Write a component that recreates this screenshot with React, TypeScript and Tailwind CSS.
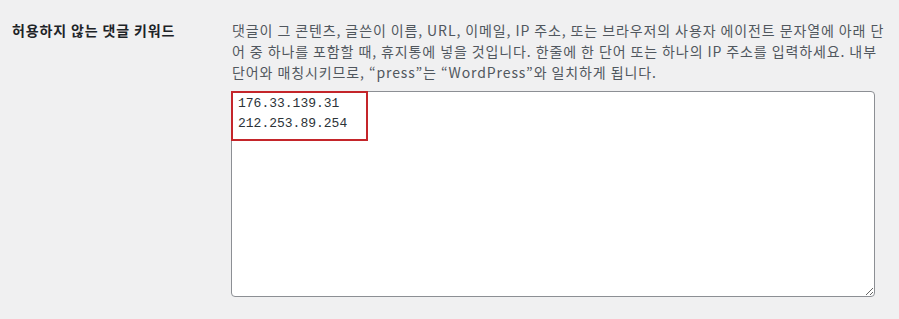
import React from 'react';

const lines = [
  '댓글이 그 콘텐츠, 글쓴이 이름, URL, 이메일, IP 주소, 또는 브라우저의 사용자 에이전트 문자열에 아래 단',
  '어 중 하나를 포함할 때, 휴지통에 넣을 것입니다. 한줄에 한 단어 또는 하나의 IP 주소를 입력하세요. 내부',
  '단어와 매칭시키므로, “press”는 “WordPress”와 일치하게 됩니다.',
];

export default function App() {
  return (
    <div className="h-[319px] w-full bg-[#f0f0f1] font-['Noto_Sans_CJK_KR','Liberation_Sans',sans-serif]">
      <div className="flex pt-[20px]">
        <div className="w-[231px] shrink-0 pl-[12px] text-[14px] font-semibold leading-[21px] tracking-[0.85px] text-[#1d2327]">
          허용하지 않는 댓글 키워드
        </div>
        <div className="w-[644px]">
          <p className="whitespace-nowrap pl-[1px] text-[14px] leading-[21px] tracking-[0.9px] text-[#50575e]">
            {lines.map((l) => (
              <span key={l} className="block">{l}</span>
            ))}
          </p>
          <div className="relative mt-[8px]">
            <textarea
              defaultValue={'176.33.139.31\n212.253.89.254'}
              spellCheck={false}
              className="block h-[206px] w-[644px] rounded-[4px] border border-[#8c8f94] bg-white px-[6px] pt-[2px] font-['Liberation_Mono',monospace] text-[13px] leading-[20px] text-[#2c3338] outline-none"
            />
            <div className="pointer-events-none absolute left-0 top-0 h-[50px] w-[137px] border-2 border-[#c4252a]" />
          </div>
        </div>
      </div>
    </div>
  );
}
